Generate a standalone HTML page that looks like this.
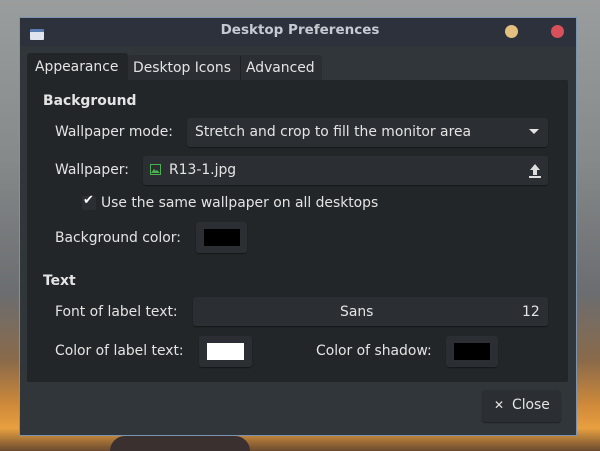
<!DOCTYPE html>
<html><head><style>
*{box-sizing:border-box;margin:0;padding:0}
body{width:600px;height:451px;overflow:hidden;position:relative;font-family:"DejaVu Sans","Liberation Sans",sans-serif;font-size:13.9px;color:#e4e4e4;
background:linear-gradient(180deg,#9a9d9d 0%,#868a8a 35%,#6b6d70 65%,#8a6a4a 80%,#d08a3a 90%,#e8a040 95%,#6a4a30 100%)}
.a{position:absolute;white-space:nowrap}
.win{position:absolute;left:19px;top:17px;width:558px;height:419px;background:#31363b;border:1px solid #7a93b0}
.title{position:absolute;left:0;top:0;width:556px;height:28px;background:#2c313b}
.pane{position:absolute;left:27px;top:80px;width:541px;height:302px;background:#232629;border-radius:2px}
.btn{position:absolute;background:#2b2f33;border-radius:3px;box-shadow:0 1px 1px rgba(0,0,0,.4)}
.b{font-weight:bold}
</style></head><body>
<div class="a" style="left:110px;top:436px;width:140px;height:15px;background:#3a3030;border-radius:20px 20px 0 0"></div>
<div class="win"></div>
<div class="title a" style="left:20px;top:18px;width:556px"></div>
<div class="a" style="left:30px;top:29px;width:14px;height:11px;background:#dfe4ee;border-top:3px solid #5a7bb0;border-radius:1px"></div>
<div class="a b" style="left:0;width:600px;text-align:center;top:22px;color:#c5cad3;font-size:13.5px">Desktop Preferences</div>
<div class="a" style="left:505px;top:25px;width:13px;height:13px;border-radius:50%;background:#e3c07f"></div>
<div class="a" style="left:551px;top:25px;width:13px;height:13px;border-radius:50%;background:#d7505a"></div>
<div class="a" style="left:27px;top:53px;width:101px;height:29px;background:#232629;border-radius:3px 3px 0 0"></div>
<div class="a" style="left:128px;top:55px;width:194px;height:25px;background:#2b2f34;border-radius:3px 3px 0 0"></div>
<div class="a" style="left:240px;top:56px;width:1px;height:24px;background:#1e2124"></div>
<div class="a" style="left:35px;top:59px">Appearance</div>
<div class="a" style="left:133px;top:60px">Desktop Icons</div>
<div class="a" style="left:246px;top:60px">Advanced</div>
<div class="pane"></div>
<div class="a b" style="left:43px;top:93px">Background</div>
<div class="a" style="left:55px;top:124px">Wallpaper mode:</div>
<div class="btn" style="left:187px;top:118px;width:361px;height:29px"></div>
<div class="a" style="left:195px;top:124px">Stretch and crop to fill the monitor area</div>
<div class="a" style="left:529px;top:129px;width:0;height:0;border-left:5px solid transparent;border-right:5px solid transparent;border-top:5px solid #e4e4e4"></div>
<div class="a" style="left:55px;top:162px">Wallpaper:</div>
<div class="btn" style="left:143px;top:156px;width:405px;height:29px"></div>
<div class="a" style="left:150px;top:164px;width:11px;height:11px;border:1.5px solid #4caf50"></div>
<svg class="a" style="left:151px;top:165px" width="9" height="9"><path d="M0 8 L3 4 L5 6 L6 5 L9 8 Z" fill="#4caf50"/></svg>
<div class="a" style="left:169px;top:162px">R13-1.jpg</div>
<svg class="a" style="left:528px;top:163px" width="14" height="16"><path d="M7 1 L12 7 H9 V12 H5 V7 H2 Z" fill="#ddd"/><rect x="1" y="13" width="12" height="2" fill="#ddd"/></svg>
<div class="a" style="left:82px;top:196px;width:14px;height:14px;background:#2b2f33;border-radius:2px"></div>
<div class="a" style="left:83px;top:193px;font-size:13px;color:#fff">✔</div>
<div class="a" style="left:101px;top:195px">Use the same wallpaper on all desktops</div>
<div class="a" style="left:55px;top:230px">Background color:</div>
<div class="btn" style="left:196px;top:222px;width:51px;height:31px"></div>
<div class="a" style="left:204px;top:229px;width:36px;height:17px;background:#000"></div>
<div class="a b" style="left:43px;top:273px">Text</div>
<div class="a" style="left:55px;top:304px">Font of label text:</div>
<div class="btn" style="left:193px;top:297px;width:355px;height:29px"></div>
<div class="a" style="left:340px;top:304px">Sans</div>
<div class="a" style="left:522px;top:304px">12</div>
<div class="a" style="left:55px;top:343px">Color of label text:</div>
<div class="btn" style="left:199px;top:336px;width:53px;height:31px"></div>
<div class="a" style="left:207px;top:343px;width:37px;height:17px;background:#fff"></div>
<div class="a" style="left:316px;top:343px">Color of shadow:</div>
<div class="btn" style="left:446px;top:336px;width:52px;height:31px"></div>
<div class="a" style="left:454px;top:343px;width:36px;height:17px;background:#000"></div>
<div class="btn" style="left:482px;top:390px;width:79px;height:32px"></div>
<div class="a" style="left:494px;top:398px;font-size:12px">✕</div>
<div class="a" style="left:512px;top:397px">Close</div>
</body></html>
